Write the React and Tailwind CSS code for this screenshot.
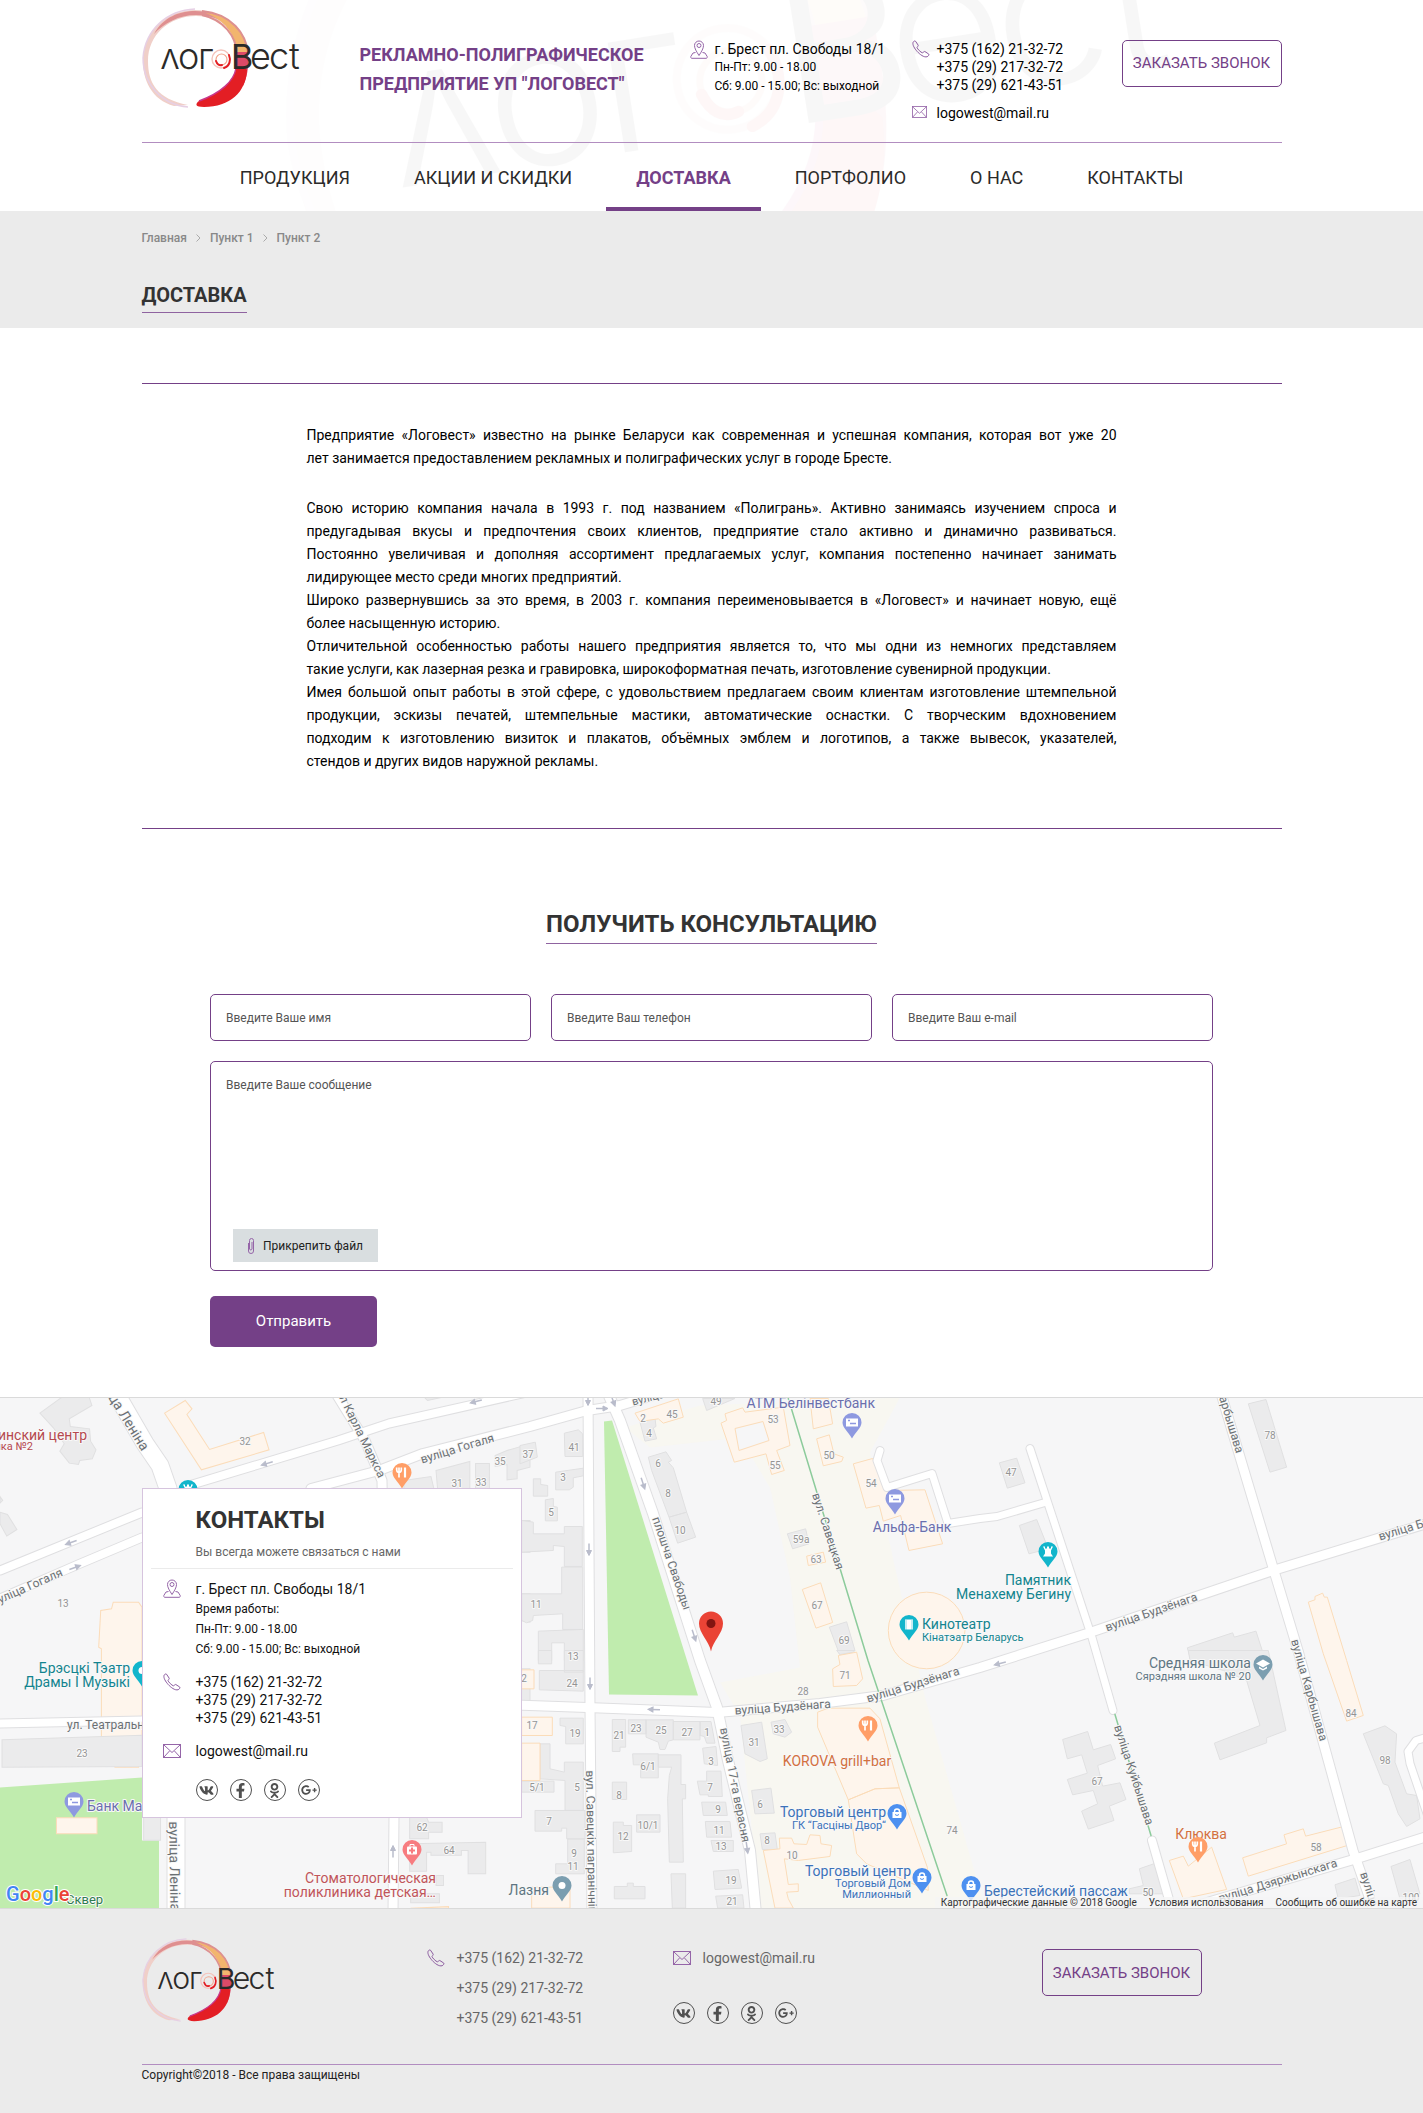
import React from "react";
import { FaVk, FaFacebookF, FaOdnoklassniki, FaGooglePlusG } from "react-icons/fa";

function LogoArt() {
  return (
    <g>
      <path d="M32 98C10 92 0 72 1 50C3 22 25 2 53 2C82 2 105 22 105 52C102 28 82 8 54 8C27 8 6 27 6 53C6 75 15 91 46 97Z" fill="#f0cfc8" />
      <path d="M46 99C20 97 1 76 1 50C3 22 25 2 53 1" fill="none" stroke="#e6cfe4" strokeWidth="1.4" />
      <path d="M12 26C21 9 38 3 53 3C68 3 80 8 89 17C78 11 66 7 54 7C37 7 22 15 12 26Z" fill="#df8f90" />
      <path d="M64 5C82 12 94 26 95 46L106 46C104 25 92 8 64 5Z" fill="#f2b56e" />
      <path d="M60 3C90 6 104 26 106 45M60 7C82 12 94 28 95 46" fill="none" stroke="#dd9090" strokeWidth="2" />
      <path d="M95 44L106 44C107 60 105 70 101 78C99 70 96 66 94 63C95 56 95 50 95 44Z" fill="#dd4a68" />
      <path d="M94 60C92 73 79 85 57 93C53 96 53 99 62 99C88 99 104 84 105 62C102 58 97 57 94 60Z" fill="#e31e24" />
      <path d="M94 60C92 73 79 85 57 93" fill="none" stroke="#c8378c" strokeWidth="1.4" />
      <g fill="none" strokeLinecap="round">
        <circle cx="79" cy="51" r="9" stroke="#f4c4bc" strokeWidth="1.4" />
        <circle cx="79.500" cy="51.500" r="5.500" stroke="#f2a58c" strokeWidth="1.2" />
        <path d="M82 60C88 58 89 52 87 47M74 53C75 56 77 58 80 57" stroke="#e31e24" strokeWidth="2" />
      </g>
      <g fill="#2b2a29" fontFamily="Inter, sans-serif" fontWeight="300" fontSize="36">
        <text x="18" y="61">ʌ</text>
        <text x="36" y="61">о</text>
        <text x="56" y="61">г</text>
        <text x="89" y="61" fontSize="34" fontWeight="400">В</text>
        <text x="108" y="61">е</text>
        <text x="127" y="61">с</text>
        <text x="147" y="61">t</text>
      </g>
    </g>
  );
}

function Logo({ className }) {
  return (
    <a href="#" aria-label="Логовест" className="block">
      <svg viewBox="0 0 162 100" className={className} aria-hidden="true">
        <LogoArt />
      </svg>
    </a>
  );
}

function PinIcon() {
  return (
    <svg width="18" height="19" viewBox="0 0 18 19" fill="none" stroke="#9565a8" strokeWidth="1" className="shrink-0" aria-hidden="true">
      <path d="M9 15.500C6.500 11.500 4.500 8.500 4.500 5.500A4.500 4.500 0 0 1 13.500 5.500C13.500 8.500 11.500 11.500 9 15.500Z" />
      <circle cx="9" cy="5.500" r="2" />
      <path d="M5.500 12.500L3 13L.8 16.500C.5 17.500 1 18.300 2 18.300H16C17 18.300 17.500 17.500 17.200 16.500L15 13L12.500 12.500" />
    </svg>
  );
}

function PhoneIcon() {
  return (
    <svg width="18" height="18" viewBox="0 0 18 18" fill="none" stroke="#8b5a9f" strokeWidth="1" strokeLinejoin="round" className="shrink-0" aria-hidden="true">
      <path d="M1 2.500C1.500 1.200 2.800.6 3.500 1.200L6.200 5.200C6.500 6 5.200 6.800 5 7.500C5.200 8.800 9 12.600 10.400 12.800C11.200 12.700 12 11.300 12.800 11.500L16.700 14C17.300 14.800 16.500 16 15.200 16.700C12 17.800 7.600 14.200 5.200 11.500C2.500 8.500.4 5 1 2.500Z" />
    </svg>
  );
}

function MailIcon({ className = "h-[14px] w-[18px]" }) {
  return (
    <svg viewBox="0 0 18 14" fill="none" stroke="#9565a8" strokeWidth="1" className={"shrink-0 " + className} aria-hidden="true">
      <rect x=".5" y=".5" width="17" height="13" />
      <path d="M1 1L9 8.500L17 1M1 13L6.500 7M17 13L11.500 7" />
    </svg>
  );
}

function Socials() {
  const items = [
    ["ВКонтакте", FaVk, 15],
    ["Facebook", FaFacebookF, 15],
    ["Одноклассники", FaOdnoklassniki, 15],
    ["Google+", FaGooglePlusG, 16],
  ];
  return (
    <div className="flex gap-3">
      {items.map(([name, Icon, size]) => (
        <a key={name} href="#" aria-label={name} className="flex h-[22px] w-[22px] items-center justify-center rounded-full border border-[#505050] text-[#505050]">
          <Icon size={size} />
        </a>
      ))}
    </div>
  );
}

function CallButton() {
  return (
    <button type="button" className="h-[47px] w-40 shrink-0 rounded-[5px] border border-[#744087] text-[15px] whitespace-nowrap text-[#744087]">
      ЗАКАЗАТЬ ЗВОНОК
    </button>
  );
}

const NAV = ["ПРОДУКЦИЯ", "АКЦИИ И СКИДКИ", "ДОСТАВКА", "ПОРТФОЛИО", "О НАС", "КОНТАКТЫ"];

function Header() {
  return (
    <header className="relative overflow-hidden">
      <svg className="absolute top-0 left-1/2 h-[211px] w-[1423px] -translate-x-1/2" viewBox="0 0 1423 211" aria-hidden="true">
        <g opacity="0.03" transform="translate(543 108) rotate(-9) scale(5.65) translate(-46 -51)">
          <LogoArt />
        </g>
      </svg>
      <div className="relative mx-auto max-w-[1140px]">
        <div className="flex h-[143px] items-start border-b border-[#b28dc0] pt-2">
          <div className="w-[218px] shrink-0"><Logo className="h-[100px] w-[162px]" /></div>
          <p className="w-[330px] shrink-0 pt-8 text-lg leading-[29px] font-bold text-[#744087]">
            РЕКЛАМНО-ПОЛИГРАФИЧЕСКОЕ<br />ПРЕДПРИЯТИЕ УП "ЛОГОВЕСТ"
          </p>
          <div className="flex w-[222px] shrink-0 gap-[7px] pt-8">
            <PinIcon />
            <div className="whitespace-nowrap">
              <p className="text-sm leading-[18px]">г. Брест пл. Свободы 18/1</p>
              <p className="text-xs leading-[19px]">Пн-Пт: 9.00 - 18.00</p>
              <p className="text-xs leading-[19px]">Сб: 9.00 - 15.00; Вс: выходной</p>
            </div>
          </div>
          <div className="pt-8 text-sm leading-[18px]">
            <div className="flex gap-[7px]">
              <PhoneIcon />
              <div>
                <p>+375 (162) 21-32-72</p>
                <p>+375 (29) 217-32-72</p>
                <p>+375 (29) 621-43-51</p>
              </div>
            </div>
            <a href="#" className="mt-[10px] flex gap-[10px]"><MailIcon className="mt-[2px] h-3 w-[15px]" />logowest@mail.ru</a>
          </div>
          <div className="ml-auto pt-8"><CallButton /></div>
        </div>
        <nav className="flex h-[68px] justify-center gap-1">
          {NAV.map((n) => (
            <a
              key={n}
              href="#"
              className={
                n === "ДОСТАВКА"
                  ? "flex items-center border-b-4 border-[#744087] px-[30px] pt-[6px] text-lg font-bold text-[#744087]"
                  : "flex items-center border-b-4 border-transparent px-[30px] pt-[6px] text-lg text-[#2b2a29]"
              }
            >
              {n}
            </a>
          ))}
        </nav>
      </div>
    </header>
  );
}

/* ---------- map ---------- */

const ROADS = [
  [17, "116,-4 145,46 160,68 168,91 176,420 176,516"],
  [8, "189,88 338,43 389,26 540,-8"],
  [9, "311,91 379,73 423,56 530,29 587,13 620,8 653,-2"],
  [8, "0,173 142,115"],
  [8, "0,201 78,167 142,140"],
  [9, "336,-4 365,43 382,83 384,200 394,420 393,516"],
  [9, "588,-4 590,310 592,516"],
  [10, "608,-4 620,23 653,116 700,263 717,310 728,363 750,453 756,516"],
  [8, "0,326 142,323 520,308"],
  [9, "500,307 587,310 717,315 820,306 883,298 980,270 1087,236 1273,173 1430,125"],
  [7, "1030,51 1092,240 1113,313"],
  [8, "1152,443 1173,516"],
  [7, "880,53 877,63 887,90 932,76 948,126 980,121 997,119 1045,105"],
  [9, "1221,-4 1273,170 1298,253 1353,453 1375,516"],
  [9, "1430,438 1357,461 1190,510"],
  [7, "1430,339 1416,343 1408,354 1410,366 1430,425"],
];

// Building outlines, in thirds of a pixel from each tile's corner.
const TILES = [
  {
    t: "translate(0 -7) scale(0.338 0.3333)",
    grey: "M118 68L190 15H262L272 45L205 85L208 108L265 115L268 152L284 178L273 205L236 210L232 222L205 218L177 182L190 160L158 112ZM0 318L8 330L0 338ZM0 365L22 372L50 417L20 437L0 400ZM1290 240L1390 213V300H1295ZM1407 219H1448V300H1407ZM1465 195L1500 180L1568 160V230L1530 240V265L1500 268V222L1465 228ZM1195 270L1275 258L1285 300H1195ZM1255 20L1300 14L1310 20L1265 30ZM1543 390H1568V485H1543ZM1543 610H1568V695L1543 690Z",
    cream: "M487 68L548 30L568 55L553 72L620 177L780 126L796 178L596 238ZM335 635H410L420 650V1100H410V1130H340L335 1115L275 1105L270 1060L300 1045V775L292 770L298 660L330 655Z",
  },
  {
    t: "translate(0 253) scale(0.338 0.3333)",
    grey: "M6 268L420 254V348L6 350ZM425 500H475V569H425ZM1212 500H1262L1268 515H1308V545H1268V565H1212ZM1212 580L1437 575V670H1385V600H1365V614H1275V605H1262V662H1212ZM1290 675H1312V705H1290ZM1215 730H1300V757H1215ZM1543 55H1568V150H1543ZM1543 390H1568V422H1543Z",
    cream: "M167 502H287V550H167ZM1215 773L1327 768V773Z",
  },
  {
    t: "translate(520 -7) scale(0.3333)",
    grey: "M0 165L46 155L52 200L0 220ZM133 128L175 118L188 130V198H135ZM107 245L190 233V256L160 262V290L148 298H107ZM40 265H62V282L83 285V317H40ZM76 328L100 324V348L112 350V391H76ZM5 390L40 395V430H133V408H187V528H133V468L100 465V480L5 485ZM5 610H125V530H188V717H128V670L40 675L38 690L20 697L5 690ZM55 722L190 717V810H133V757H95V810H55ZM548 24H645L560 60ZM360 95L405 82L408 108L400 112L410 145L375 152ZM385 200L438 184L455 210L445 215L460 232L500 365L447 380L395 240ZM447 380L500 365L527 440L473 458ZM802 430L857 415L867 460L818 475ZM928 710L980 694L1005 780L960 795Z",
    cream: "M345 68L475 25L490 80L430 98L415 85L360 93ZM615 70L668 52L675 65L790 50L810 165L770 180L793 240L755 252L738 190L643 215L603 98L620 90ZM870 24H925L938 100L880 115ZM890 145L928 133L942 190L970 200L965 213L910 226ZM1000 220L1058 204L1095 300L1215 298L1268 460L1167 480L1142 375L1090 392L1078 345L1038 353ZM860 497L910 485L917 515L865 525ZM847 597L902 577L938 696L888 713ZM1105 720A115 115 0 0 1 1335 720A115 115 0 0 1 1105 720Z",
  },
  {
    t: "translate(520 253) scale(0.3333)",
    grey: "M55 0H95V40H55ZM133 0H190V65H133ZM58 60H190V122L58 118ZM120 203H190V280H137V228L120 225ZM60 280H90V355L133 365V335H190V480H135V390L60 385ZM5 392H102V425H5ZM45 480H195V565H140V533H125V542H45ZM143 565H193V670H107V640H143ZM277 207H317V290H300V303H277ZM325 208H378V250H325ZM378 208H460V268L445 272L435 297H420L415 275L378 260ZM460 213H540V268H460ZM540 213H573L585 278H560L553 258L540 255ZM548 293L588 288L593 345L553 340ZM338 310H415V382H362V343H340ZM415 313H483V402H497V445H487L490 635H448L443 445L448 375L455 350H415ZM560 362H603L607 438H565V433H540L532 392H560ZM277 395H320V447H277ZM545 455H617L622 495H550ZM556 513H630L635 560H560ZM573 570H640V603H580ZM350 493H420V545H350ZM280 515H310V525H335V603L280 607ZM283 708H322V698H340V708H375V745H283ZM453 670H497V773H457ZM580 662L655 657L665 713L585 717ZM587 737L668 733L672 773H593ZM663 225L725 215L742 325L720 333L675 310ZM753 215L795 207L815 245L795 260L760 250ZM695 420L753 413L763 488L705 490ZM720 550L765 547L772 597H727ZM950 0H1005L1000 5L960 12Z",
    cream: "M5 58H42V115H5ZM5 200H97V255H5ZM5 278H60V390H5ZM938 55L960 42L955 15L1010 5L1028 85L1010 105L940 108ZM893 185L925 173H1050L1080 205L1138 412L1065 415L985 448L893 230ZM985 448L1065 415L1138 412L1222 650L1225 720L1040 640L1010 610ZM730 600L780 595L778 563H815L822 580L860 582L870 553L900 555L903 580L935 585L930 618L835 630L793 625L805 702L835 700V723L800 725L805 745L820 773H765ZM35 710H150V773H35Z",
  },
  {
    t: "translate(970 -7) scale(0.3333)",
    grey: "M88 217L140 203L165 277L112 293ZM148 405L200 387L235 475L177 490ZM835 40L888 27L950 230L900 245ZM652 772L788 727L793 740L858 722L880 790V810H800V780L740 795L660 800Z",
    cream: "M1015 635L1035 628V618L1058 608L1063 620H1072L1130 810L1180 975L1130 992L1060 790Z",
  },
  {
    t: "translate(970 253) scale(0.3333)",
    grey: "M655 0H895L948 240L890 262V277L750 328L733 278L870 225L830 90L760 60L660 30ZM278 267L353 243L370 298L422 282L437 325L383 345L398 407L450 397L468 447L418 467L432 510L355 536L335 482L383 460L370 420L308 433L292 387L352 368L335 313L292 325ZM1180 250L1245 226L1280 250L1275 335L1310 430L1340 435L1350 505L1310 528L1285 490L1255 405L1240 400ZM508 655L560 637L585 730H478V715L520 705ZM1263 648L1320 627L1350 730L1290 745ZM1095 703L1155 683L1170 735L1105 745Z",
    cream: "M598 630L640 617L655 647L725 590L770 717L640 745ZM818 622L950 580L942 553L1000 535L1007 557L1133 525L1148 580L835 677Z",
  },
];

// [text, x, baseline, size, rotation]
const STREETS = [
  ["ца Леніна", 108, 0, 14, 58], ["л Карла Маркса", 339, 0, 12, 64], ["вуліца Гогаля", 422, 66, 12, -17],
  ["уліца Гогаля", 0, 206, 12, -24], ["вуліца", 633, 8, 11, -14], ["плошча Свабоды", 652, 121, 12, 71],
  ["вул. Савецкая", 812, 97, 12, 72], ["вуліца Будзёнага", 735, 317, 12, -4], ["вуліца Будзёнага", 868, 305, 12, -17],
  ["вуліца Будзёнага", 1107, 234, 12, -19], ["вуліца Будзёнага", 1380, 143, 12, -17], ["арбышава", 1219, 0, 12, 73],
  ["вуліца Карбышава", 1291, 243, 12, 74], ["вуліца Куйбышава", 1114, 329, 12, 72], ["вуліца Дзяржынскага", 1220, 505, 12, -17],
  ["вуліца", 1360, 476, 12, 72], ["вуліца 17-га верасня", 720, 331, 12, 79], ["вул. Савецкіх пагранічнікаў", 586, 373, 12, 89],
  ["вуліца Леніна", 169, 424, 14, 89], ["ул. Театральная", 67, 331, 12, 0],
];

const NUMBERS = [
  ["32", 245, 47], ["35", 500, 67], ["37", 528, 60], ["31", 457, 89], ["33", 481, 88], ["13", 63, 209], ["23", 82, 359],
  ["62", 422, 433], ["64", 449, 456], ["2", 643, 24], ["45", 672, 20], ["49", 716, 7], ["4", 649, 39], ["41", 574, 53],
  ["6", 658, 69], ["3", 563, 83], ["8", 668, 99], ["5", 551, 118], ["10", 680, 136], ["53", 773, 25],
  ["55", 775, 71], ["50", 829, 61], ["54", 871, 89], ["59а", 801, 145], ["63", 816, 165], ["67", 817, 211], ["69", 844, 246],
  ["11", 536, 210], ["13", 573, 262], ["24", 572, 289], ["2", 524, 284], ["17", 532, 331], ["19", 575, 339], ["21", 619, 341],
  ["23", 636, 334], ["25", 661, 336], ["27", 687, 338], ["1", 707, 338], ["31", 754, 348], ["33", 779, 335], ["71", 845, 281],
  ["28", 803, 297], ["3", 711, 367], ["6/1", 648, 372], ["8", 619, 401], ["7", 710, 393], ["5", 577, 393], ["5/1", 537, 393],
  ["7", 549, 427], ["9", 718, 415], ["6", 760, 410], ["10/1", 648, 431], ["12", 623, 442], ["11", 719, 436], ["13", 721, 452],
  ["9", 574, 459], ["11", 573, 472], ["8", 767, 446], ["10", 792, 461], ["19", 731, 486], ["21", 732, 507], ["74", 952, 436],
  ["47", 1011, 78], ["78", 1270, 41], ["67", 1097, 387], ["84", 1351, 319], ["98", 1385, 366], ["58", 1316, 453],
  ["50", 1148, 498], ["100", 1411, 503],
];

// [text, x, baseline, size, colour, anchor]
const PLACES = [
  ["Медицинский центр", 87, 42, 14, "#b5494f", "end"], ["Поликлиника №2", 33, 52, 11, "#b5494f", "end"],
  ["АТМ Белінвестбанк", 875, 10, 14, "#6b6fad", "end"], ["Альфа-Банк", 912, 134, 14, "#6b6fad", "middle"],
  ["Банк Масква", 87, 413, 14, "#6b6fad", "start"],
  ["Памятник", 1071, 187, 14, "#13848f", "end"], ["Менахему Бегину", 1071, 201, 14, "#13848f", "end"],
  ["Кинотеатр", 922, 231, 14, "#13848f", "start"], ["Кінатэатр Беларусь", 922, 243, 11, "#13848f", "start"],
  ["Брэсцкі Тэатр", 130, 275, 14, "#13848f", "end"], ["Драмы І Музыкі", 130, 289, 14, "#13848f", "end"],
  ["Средняя школа", 1251, 270, 14, "#5f7683", "end"], ["Сярэдняя школа № 20", 1251, 282, 11, "#5f7683", "end"],
  ["KOROVA grill+bar", 837, 368, 14, "#d3703f", "middle"], ["Клюква", 1201, 441, 14, "#d3703f", "middle"],
  ["Торговый центр", 886, 419, 14, "#3c72b8", "end"], ["ГК “Гасціны Двор“", 886, 431, 11, "#3c72b8", "end"],
  ["Торговый центр", 911, 478, 14, "#3c72b8", "end"], ["Торговый Дом", 911, 489, 11, "#3c72b8", "end"],
  ["Миллионный", 911, 500, 11, "#3c72b8", "end"], ["Берестейский пассаж", 984, 498, 14, "#3c72b8", "start"],
  ["Стоматологическая", 436, 485, 14, "#c0545a", "end"], ["поликлиника детская…", 436, 499, 14, "#c0545a", "end"],
  ["Лазня", 549, 497, 14, "#5f7683", "end"], ["Сквер", 66, 506, 13, "#2e7d4f", "start"],
];

const GLYPHS = {
  food: <g stroke="#fff" strokeWidth="1.700" fill="none"><path d="M3 5V-5" strokeWidth="2.200" /><path d="M-3 0V5M-3 -5V0M-5.300 -5V-2.500Q-5 0 -3 0Q-1 0 -.7 -2.500V-5" /></g>,
  bank: <g><rect x="-6" y="-4" width="12" height="8" fill="#fff" /><path d="M-4 -2h2M-2 1h6" stroke="#8e99e0" strokeWidth="1.500" /></g>,
  tower: <path d="M-5 -5H-3V-3H-1V-5H1V-3H3V-5H5L3 -1V2L5 5H-5L-3 2V-1Z" fill="#fff" />,
  film: <g><rect x="-4" y="-5" width="8" height="10" fill="#fff" /><path d="M-3 -4V5M3 -4V5" stroke="#12b5cb" strokeWidth="1" strokeDasharray="1 1" /></g>,
  bag: <g fill="none" stroke="#fff"><rect x="-4" y="-1" width="8" height="5" fill="#fff" /><path d="M-2.500 -1V-2A2.500 2.500 0 0 1 2.500 -2V-1" strokeWidth="1.500" /><path d="M-2 1Q0 3 2 1" stroke="#4d90f0" /></g>,
  school: <path d="M-7 -1L0 -5L7 -1L0 3ZM-4 2L0 4.500L4 2V4L0 6L-4 4Z" fill="#fff" />,
  dot: <circle r="3.500" fill="#fff" />,
  med: <g><rect x="-5" y="-3" width="10" height="8" rx="1" fill="#fff" /><path d="M-2 -3V-5H2V-3" fill="none" stroke="#fff" /><path d="M0 -2V4M-3 1H3" stroke="#f77c80" strokeWidth="2" /></g>,
};

const PINS = [
  [402, 75, "#ff9e67", "food"], [868, 328, "#ff9e67", "food"], [1198, 449, "#ff9e67", "food"],
  [852, 25, "#8e99e0", "bank"], [895, 101, "#8e99e0", "bank"], [74, 404, "#8e99e0", "bank"],
  [188, 92, "#12b5cb", "tower"], [1048, 154, "#12b5cb", "tower"], [909, 227, "#12b5cb", "film"], [142, 273, "#12b5cb", "dot"],
  [897, 416, "#4d90f0", "bag"], [922, 480, "#4d90f0", "bag"], [971, 488, "#4d90f0", "bag"],
  [1263, 267, "#7b9eb0", "school"], [562, 488, "#7b9eb0", "dot"], [412, 452, "#f77c80", "med"],
];

const ARROWS = [
  [267, 66, 163], [71, 145, 160], [75, 170, -20], [476, 4, 165], [602, 11, 0], [588, 2, 90], [613, 3, 70], [643, 86, 72],
  [589, 152, 90], [694, 238, 72], [590, 286, 90], [654, 312, 182], [747, 450, 82], [393, 454, -90], [1000, 266, 165],
];

function MapCanvas() {
  return (
    <svg viewBox="0 0 1423 511" preserveAspectRatio="xMidYMid slice" className="absolute inset-0 h-full w-full" fontFamily="Roboto, sans-serif" aria-hidden="true">
      <rect width="1423" height="511" fill="#f6f6f7" />
      <path d="M625 30L700 8L900 0L870 55L895 170L925 300L985 511H760L740 318L720 285L800 270L790 180L770 90L740 40L650 50Z" fill="#f8f7f1" />
      <path d="M604 24L612 23L698 298L609 297Z" fill="#c0ecae" />
      <path d="M0 390L142 380V443H159V511H0Z" fill="#c0ecae" />
      {TILES.map((tile) => (
        <g key={tile.t} transform={tile.t} strokeWidth="3">
          <path d={tile.grey} fill="#ebebec" stroke="#e0e0e1" />
          <path d={tile.cream} fill="#fef5ec" stroke="#fbdcb9" />
        </g>
      ))}
      <path d="M735 31L763 24L769 43L739 53Z" fill="#f6f6f7" stroke="#fbdcb9" />
      <g fill="none" strokeLinejoin="round" strokeLinecap="round">
        {ROADS.map(([w, pts]) => <polyline key={pts} points={pts} stroke="#dfdfe1" strokeWidth={w + 2} />)}
        {ROADS.map(([w, pts]) => <polyline key={pts} points={pts} stroke="#ffffff" strokeWidth={w} />)}
        <path d="M788 0L868 263L947 498M1115 317L1151 438" stroke="#8ccb9b" strokeWidth="1.500" />
      </g>
      <g stroke="#b9bccb" fill="#b9bccb">
        {ARROWS.map(([x, y, r]) => (
          <g key={x + "-" + y} transform={`translate(${x} ${y}) rotate(${r})`}>
            <path d="M-6 0H3" strokeWidth="1.500" /><path d="M1 -2.500L6 0L1 2.500Z" strokeWidth="1" />
          </g>
        ))}
      </g>
      <g stroke="#f8f8f8" strokeWidth="2" strokeLinejoin="round" paintOrder="stroke">
        {NUMBERS.map(([s, x, y], i) => <text key={i} x={x} y={y} fontSize="10" fill="#949494" textAnchor="middle">{s}</text>)}
        {STREETS.map(([s, x, y, f, r], i) => (
          <text key={i} x={x} y={y} fontSize={f} fill="#6b7074" transform={`rotate(${r} ${x} ${y})`}>{s}</text>
        ))}
        {PLACES.map(([s, x, y, f, c, a], i) => <text key={i} x={x} y={y} fontSize={f} fill={c} textAnchor={a}>{s}</text>)}
      </g>
      {PINS.map(([x, y, c, g]) => (
        <g key={x + "-" + y} transform={`translate(${x} ${y})`}>
          <path d="M-9.500 0A9.500 9.500 0 0 1 9.500 0C9.500 5 4 9 0 16C-4 9 -9.500 5 -9.500 0Z" fill={c} />
          {GLYPHS[g]}
        </g>
      ))}
      <g transform="translate(711 226)">
        <path d="M0 28C-2 17 -12 10 -12 0A12 12 0 0 1 12 0C12 10 2 17 0 28Z" fill="#ea4335" />
        <circle r="4.500" fill="#811411" />
      </g>
      <text x="6" y="503" fontSize="20" fontWeight="500" stroke="#fff" strokeWidth="2" paintOrder="stroke">
        <tspan fill="#4285f4">G</tspan><tspan fill="#ea4335">o</tspan><tspan fill="#fbbc05">o</tspan><tspan fill="#4285f4">g</tspan><tspan fill="#34a853">l</tspan><tspan fill="#ea4335">e</tspan>
      </text>
    </svg>
  );
}

function ContactCard() {
  return (
    <div className="w-[380px] border border-[#d6c4de] bg-white px-2 pt-[13px] pb-4">
      <div className="border-b border-[#ebebeb] pb-[6px] pl-[45px]">
        <h2 className="text-2xl leading-9 font-bold text-[#333]">КОНТАКТЫ</h2>
        <p className="mt-[5px] text-xs leading-[19px] text-[#666]">Вы всегда можете связаться с нами</p>
      </div>
      <div className="pl-[12px] text-sm leading-[18px] text-[#111]">
        <div className="mt-[10px] flex gap-[15px]">
          <PinIcon />
          <div>
            <p className="leading-5">г. Брест пл. Свободы 18/1</p>
            <p className="text-xs leading-5">Время работы:<br />Пн-Пт: 9.00 - 18.00<br />Сб: 9.00 - 15.00; Вс: выходной</p>
          </div>
        </div>
        <div className="mt-[14px] flex gap-[15px]">
          <PhoneIcon />
          <div><p>+375 (162) 21-32-72</p><p>+375 (29) 217-32-72</p><p>+375 (29) 621-43-51</p></div>
        </div>
        <a href="#" className="mt-[15px] flex items-center gap-[15px]"><MailIcon />logowest@mail.ru</a>
        <div className="mt-[19px] ml-[33px]"><Socials /></div>
      </div>
    </div>
  );
}

/* Each inner array is a paragraph; every line but its last is set to the full measure. */
const PARAGRAPHS = [
  [
    "Предприятие «Логовест» известно на рынке Беларуси как современная и успешная компания, которая вот уже 20",
    "лет занимается предоставлением рекламных и полиграфических услуг в городе Бресте.",
  ],
  [
    "Свою историю компания начала в 1993 г. под названием «Полигрань». Активно занимаясь изучением спроса и",
    "предугадывая вкусы и предпочтения своих клиентов, предприятие стало активно и динамично развиваться.",
    "Постоянно увеличивая и дополняя ассортимент предлагаемых услуг, компания постепенно начинает занимать",
    "лидирующее место среди многих предприятий.",
  ],
  [
    "Широко развернувшись за это время, в 2003 г. компания переименовывается в «Логовест» и начинает новую, ещё",
    "более насыщенную историю.",
  ],
  [
    "Отличительной особенностью работы нашего предприятия является то, что мы одни из немногих представляем",
    "такие услуги, как лазерная резка и гравировка, широкоформатная печать, изготовление сувенирной продукции.",
  ],
  [
    "Имея большой опыт работы в этой сфере, с удовольствием предлагаем своим клиентам изготовление штемпельной",
    "продукции, эскизы печатей, штемпельные мастики, автоматические оснастки. С творческим вдохновением",
    "подходим к изготовлению визиток и плакатов, объёмных эмблем и логотипов, а также вывесок, указателей,",
    "стендов и других видов наружной рекламы.",
  ],
];

const FIELD = "h-[47px] w-full rounded-[5px] border border-[#744087] px-[15px] text-xs text-[#444] outline-none placeholder:text-[#555]";

function Chevron() {
  return (
    <svg width="5" height="8" viewBox="0 0 5 8" fill="none" stroke="#aaa" aria-hidden="true">
      <path d="M.5 .5L4 4L.5 7.500" />
    </svg>
  );
}

export default function App() {
  return (
    <div className="bg-white font-[Roboto,sans-serif] text-black">
      <Header />

      <section className="bg-[#ebebeb]">
        <div className="mx-auto h-[117px] max-w-[1140px] pt-[17px]">
          <nav aria-label="Хлебные крошки" className="flex items-center gap-[9px] text-xs leading-5 font-medium text-[#888]">
            <a href="#">Главная</a>
            <Chevron />
            <a href="#">Пункт 1</a>
            <Chevron />
            <a href="#">Пункт 2</a>
          </nav>
          <h1 className="mt-[33px] inline-block border-b border-[#8f63a0] pb-[3px] text-xl leading-7 font-bold text-[#333]">ДОСТАВКА</h1>
        </div>
      </section>

      <main>
        <section className="mx-auto mt-[55px] max-w-[1140px] border-y border-[#744087] py-10">
          <div className="mx-auto max-w-[810px] pb-[15px] text-sm leading-[23px]">
            {PARAGRAPHS.map((lines, i) => (
              <p key={i} className={i === 0 ? "mb-[27px]" : ""}>
                {lines.map((line, j) => (
                  <span key={j} className={j < lines.length - 1 ? "block text-justify [text-align-last:justify]" : "block"}>
                    {line}{" "}
                  </span>
                ))}
              </p>
            ))}
          </div>
        </section>

        <section className="mx-auto max-w-[1003px] pt-[79px] pb-[50px]">
          <div className="text-center">
            <h2 className="inline-block border-b border-[#8f63a0] pb-[3px] text-2xl leading-8 font-bold text-[#333]">ПОЛУЧИТЬ КОНСУЛЬТАЦИЮ</h2>
          </div>
          <form className="mt-[50px]" onSubmit={(e) => e.preventDefault()}>
            <div className="grid grid-cols-3 gap-5">
              <input aria-label="Имя" className={FIELD} placeholder="Введите Ваше имя" />
              <input aria-label="Телефон" type="tel" className={FIELD} placeholder="Введите Ваш телефон" />
              <input aria-label="E-mail" type="email" className={FIELD} placeholder="Введите Ваш e-mail" />
            </div>
            <div className="relative mt-5">
              <textarea aria-label="Сообщение" className="block h-[210px] w-full resize-none rounded-[5px] border border-[#744087] px-[15px] py-[14px] text-xs leading-[18px] outline-none placeholder:text-[#555]" placeholder="Введите Ваше сообщение" />
              <button type="button" className="absolute bottom-[9px] left-[23px] flex h-[33px] w-[145px] items-center justify-center gap-[9px] bg-[#d9dee0] text-xs text-[#222]">
                <svg width="6" height="16" viewBox="0 0 6 16" fill="none" stroke="#9565a8" aria-hidden="true">
                  <path d="M.5 5V13A2.500 2.500 0 0 0 5.500 13V2.500A2 2 0 0 0 1.500 2.500V11A1.300 1.300 0 0 0 4 11V4" />
                </svg>
                Прикрепить файл
              </button>
            </div>
            <button type="submit" className="mt-[25px] block h-[51px] w-[167px] rounded-[5px] bg-[#744087] text-[15px] text-white">Отправить</button>
          </form>
        </section>

        <section className="relative h-[512px] overflow-hidden border-y border-[#dadada]">
          <MapCanvas />
          <div className="relative mx-auto max-w-[1140px] pt-[90px]"><ContactCard /></div>
          <div className="absolute right-0 bottom-0 flex gap-3 bg-[#f5f5f5]/80 px-[6px] text-[10px] leading-[11px] text-[#333]">
            <span>Картографические данные © 2018 Google</span>
            <a href="#">Условия использования</a>
            <a href="#">Сообщить об ошибке на карте</a>
          </div>
        </section>
      </main>

      <footer className="bg-[#ebebeb]">
        <div className="mx-auto h-[204px] max-w-[1140px] pt-[29px]">
          <div className="flex h-[127px] items-start border-b border-[#b28dc0] text-sm leading-[18px] text-[#666]">
            <div className="w-[285px] shrink-0"><Logo className="h-[84px] w-[136px]" /></div>
            <div className="flex w-[246px] shrink-0 gap-3 pt-[11px]">
              <PhoneIcon />
              <div className="-mt-[6px] leading-[30px]"><p>+375 (162) 21-32-72</p><p>+375 (29) 217-32-72</p><p>+375 (29) 621-43-51</p></div>
            </div>
            <div className="pt-[11px]">
              <a href="#" className="flex items-center gap-3"><MailIcon />logowest@mail.ru</a>
              <div className="mt-[35px]"><Socials /></div>
            </div>
            <div className="mr-20 ml-auto pt-[11px]"><CallButton /></div>
          </div>
          <p className="text-xs leading-5 text-[#222]">Copyright©2018 - Все права защищены</p>
        </div>
      </footer>
    </div>
  );
}
